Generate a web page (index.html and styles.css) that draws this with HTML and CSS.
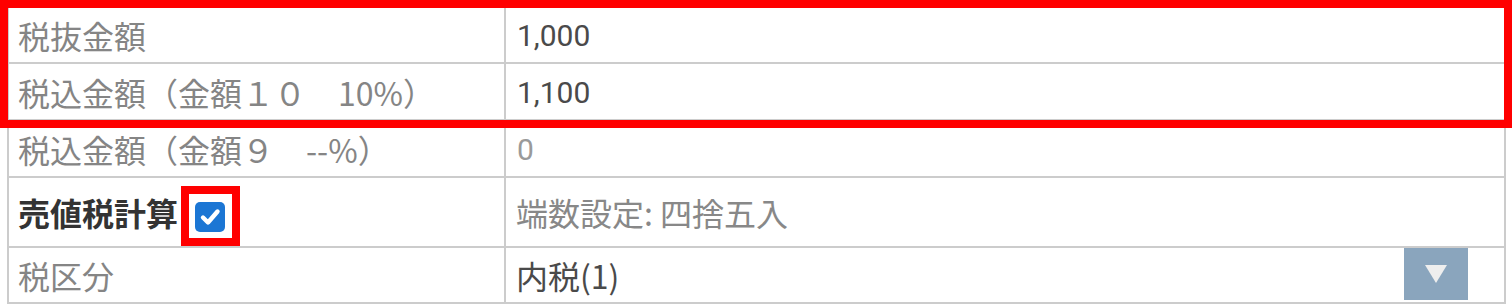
FILE: index.html
```html
<!DOCTYPE html>
<html lang="ja">
<head>
<meta charset="utf-8">
<title>税額</title>
<link rel="stylesheet" href="styles.css">
</head>
<body>
<div class="sheet">
  <div class="grid">
    <div class="cell label">税抜金額</div>
    <div class="cell value dark num">1,000</div>

    <div class="cell label">税込金額（金額１０　10%）</div>
    <div class="cell value dark num">1,100</div>

    <div class="cell label">税込金額（金額９　--%）</div>
    <div class="cell value light num">0</div>

    <div class="cell label tall">
      <span class="strong">売値税計算</span>
      <span class="mark-box">
        <span class="check">
          <svg width="30" height="30" viewBox="0 0 30 30"><polyline points="8,15.5 13,20.5 22.5,9.5" fill="none" stroke="#fff" stroke-width="4.4" stroke-linecap="round" stroke-linejoin="round"/></svg>
        </span>
      </span>
    </div>
    <div class="cell value mid">端数設定: 四捨五入</div>

    <div class="cell label">税区分</div>
    <div class="cell value select">
      <span class="dark">内税(1)</span>
      <span class="drop">
        <svg width="22" height="18" viewBox="0 0 22 18"><polygon points="0,0 22,0 11,18" fill="#eeeeee"/></svg>
      </span>
    </div>
  </div>
  <div class="highlight"></div>
</div>
</body>
</html>
```

FILE: styles.css
```css
html, body {
  margin: 0;
  padding: 0;
  background: #ffffff;
}

body {
  font-family: "Noto Sans CJK JP", "Noto Sans", sans-serif;
  font-size: 32px;
  color: #808080;
}

.sheet {
  position: relative;
  width: 1512px;
  height: 304px;
  overflow: hidden;
}

.grid {
  margin: 5px 0 0 7px;
  width: 1499px;
  box-sizing: border-box;
  display: grid;
  grid-template-columns: 497px 1fr;
  grid-template-rows: 57px 57px 57px 70px 56px;
  border-top: 2px solid #cccccc;
  border-left: 2px solid #cccccc;
}

.cell {
  box-sizing: border-box;
  border-right: 2px solid #cccccc;
  border-bottom: 2px solid #cccccc;
  display: flex;
  align-items: center;
  white-space: nowrap;
  line-height: 1;
}

.label {
  padding-left: 9px;
  color: #858585;
}

.value {
  padding-left: 10px;
}

.num {
  font-family: Roboto, "Noto Sans", sans-serif;
  font-size: 30px;
  padding-left: 11px;
  padding-top: 2px;
}

.dark {
  color: #4a4a4a;
}

.light {
  color: #9a9a9a;
}

.mid {
  color: #888888;
}

.strong {
  font-weight: bold;
  color: #333333;
}

.mark-box {
  align-self: flex-end;
  margin-left: 3px;
  border: 8px solid #ff0000;
  padding: 8px 7px 6px 6px;
  display: flex;
}

.check {
  width: 30px;
  height: 30px;
  border-radius: 5px;
  background: #1b76d4;
  display: flex;
}

.select {
  padding-right: 36px;
  justify-content: space-between;
  align-items: stretch;
}

.select .dark {
  display: flex;
  align-items: center;
}

.drop {
  width: 64px;
  height: 52px;
  background: #8aa5bd;
  display: flex;
  align-items: center;
  justify-content: center;
}

.highlight {
  position: absolute;
  top: 0;
  left: 0;
  width: 1512px;
  height: 128px;
  box-sizing: border-box;
  border: 8px solid #ff0000;
  pointer-events: none;
}
```
